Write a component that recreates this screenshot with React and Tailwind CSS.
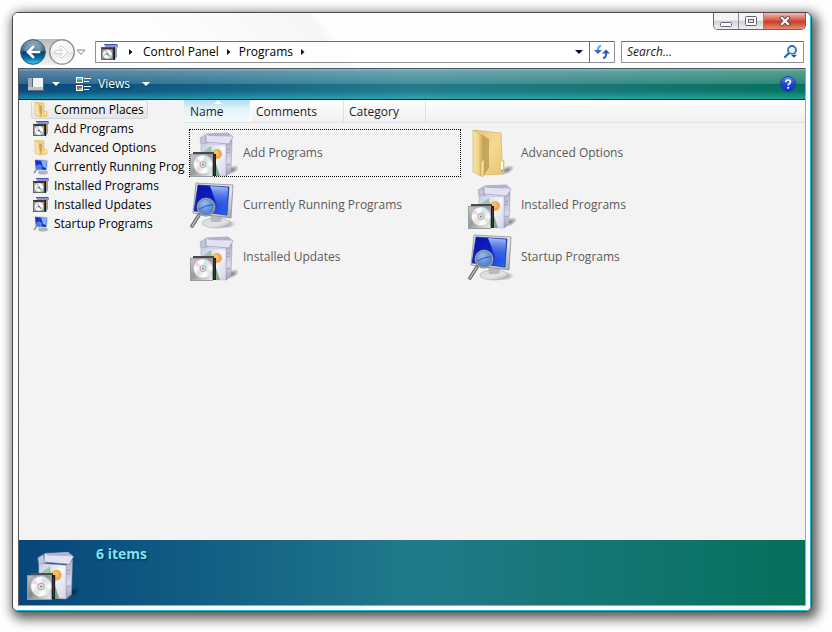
import React from 'react';

const places = [
  { label: 'Common Places', icon: 'folder', selected: true },
  { label: 'Add Programs', icon: 'programs' },
  { label: 'Advanced Options', icon: 'folder' },
  { label: 'Currently Running Prog', icon: 'monitor' },
  { label: 'Installed Programs', icon: 'programs' },
  { label: 'Installed Updates', icon: 'programs' },
  { label: 'Startup Programs', icon: 'monitor' },
];

const items = [
  { label: 'Add Programs', icon: 'programs', focused: true },
  { label: 'Advanced Options', icon: 'folder' },
  { label: 'Currently Running Programs', icon: 'monitor' },
  { label: 'Installed Programs', icon: 'programs' },
  { label: 'Installed Updates', icon: 'programs' },
  { label: 'Startup Programs', icon: 'monitor' },
];

// Gradients shared by all the icons
const IconDefs = () => (
  <svg className="absolute w-0 h-0" aria-hidden="true">
    <defs>
      <linearGradient id="boxFront" x1="0" y1="0" x2="1" y2="1">
        <stop offset="0" stopColor="#c6c6df" />
        <stop offset="0.5" stopColor="#f6f6fd" />
        <stop offset="1" stopColor="#d3d3e8" />
      </linearGradient>
      <linearGradient id="boxSide" x1="0" y1="0" x2="0" y2="1">
        <stop offset="0" stopColor="#b0b0c8" />
        <stop offset="0.6" stopColor="#d9d9ea" />
        <stop offset="1" stopColor="#9c9cb8" />
      </linearGradient>
      <linearGradient id="disc" x1="0" y1="0" x2="1" y2="1">
        <stop offset="0" stopColor="#f1e3ea" />
        <stop offset="0.3" stopColor="#ffffff" />
        <stop offset="0.5" stopColor="#e0e0e3" />
        <stop offset="0.7" stopColor="#fdfdfd" />
        <stop offset="1" stopColor="#dcebe0" />
      </linearGradient>
      <linearGradient id="caseGlass" x1="0" y1="0" x2="1" y2="1">
        <stop offset="0" stopColor="#c9cccd" stopOpacity="0.95" />
        <stop offset="0.45" stopColor="#8b9092" stopOpacity="0.9" />
        <stop offset="1" stopColor="#f4f4f6" stopOpacity="0.95" />
      </linearGradient>
      <linearGradient id="folderBack" x1="0" y1="0" x2="1" y2="1">
        <stop offset="0" stopColor="#e6c576" />
        <stop offset="0.5" stopColor="#f4db92" />
        <stop offset="1" stopColor="#e5c26b" />
      </linearGradient>
      <linearGradient id="folderFlap" x1="0" y1="0" x2="1" y2="0">
        <stop offset="0" stopColor="#fae6a4" />
        <stop offset="0.5" stopColor="#f1d384" />
        <stop offset="1" stopColor="#b89a54" />
      </linearGradient>
      <linearGradient id="screen" x1="0" y1="0" x2="1" y2="1">
        <stop offset="0" stopColor="#04109a" />
        <stop offset="0.4" stopColor="#0b22c8" />
        <stop offset="1" stopColor="#2f6cf2" />
      </linearGradient>
      <linearGradient id="screenShine" x1="0" y1="0" x2="0" y2="1">
        <stop offset="0" stopColor="#c4dcff" stopOpacity="0.85" />
        <stop offset="1" stopColor="#2c63ea" stopOpacity="0.1" />
      </linearGradient>
      <linearGradient id="bezel" x1="0" y1="0" x2="1" y2="1">
        <stop offset="0" stopColor="#d6d9dc" />
        <stop offset="0.6" stopColor="#e3e4e6" />
        <stop offset="1" stopColor="#9da2a7" />
      </linearGradient>
      <radialGradient id="lens" cx="0.4" cy="0.3" r="0.8">
        <stop offset="0" stopColor="#94bbf0" />
        <stop offset="1" stopColor="#3b6ecb" />
      </radialGradient>
      <radialGradient id="floorShadow">
        <stop offset="0" stopColor="#000" stopOpacity="0.5" />
        <stop offset="1" stopColor="#000" stopOpacity="0" />
      </radialGradient>
      <linearGradient id="backBall" x1="0" y1="0" x2="0" y2="1">
        <stop offset="0" stopColor="#8fa9bd" />
        <stop offset="0.45" stopColor="#3a6d93" />
        <stop offset="0.5" stopColor="#053c68" />
        <stop offset="0.75" stopColor="#0b6fa5" />
        <stop offset="1" stopColor="#3fd0f2" />
      </linearGradient>
      <linearGradient id="forwardBall" x1="0" y1="0" x2="0" y2="1">
        <stop offset="0" stopColor="#ffffff" />
        <stop offset="0.48" stopColor="#f2f2f2" />
        <stop offset="0.52" stopColor="#e6e6e7" />
        <stop offset="1" stopColor="#ffffff" />
      </linearGradient>
      <linearGradient id="helpBall" x1="0" y1="0" x2="0" y2="1">
        <stop offset="0" stopColor="#6d90f0" />
        <stop offset="0.5" stopColor="#1d43d8" />
        <stop offset="1" stopColor="#1230c4" />
      </linearGradient>
    </defs>
  </svg>
);

const ProgramsIcon = ({ className }) => (
  <svg viewBox="0 0 48 48" className={className} aria-hidden="true">
    <ellipse cx="42" cy="41" rx="8" ry="4" fill="url(#floorShadow)" transform="rotate(-25 42 41)" />
    <path d="M10 9l5-3 2 8-6 1z" fill="#c3c3dc" stroke="#8a8aad" strokeWidth=".5" />
    <path d="M36 16l6-5-1 32-5 4z" fill="url(#boxSide)" stroke="#9090b0" strokeWidth=".5" />
    <path d="M37 21l3-1M37 24l3-1M37 36l3-1" stroke="#75759c" strokeWidth=".6" />
    <path d="M11 14l25 2v31l-25-1z" fill="url(#boxFront)" stroke="#a1a1c4" strokeWidth=".5" />
    <path d="M16 5l22-1 5 4-4 7-23-2z" fill="#e2e2f2" stroke="#8383aa" strokeWidth=".6" />
    <path d="M17 5l21-1 4 3.500-23-.5z" fill="#b2b2d0" />
    <path d="M11 24l10-7 2 10-12 1z" fill="#9dc4ac" />
    <path d="M26 35l4 12h-4z" fill="#74ad86" />
    <circle cx="27" cy="25" r="5" fill="#eda944" />
    <circle cx="26" cy="24" r="3" fill="#f5bf68" />
    <path d="M3 23h21v2h2v22h-4V25H3z" fill="#1d1d1f" />
    <path d="M3 24h21" stroke="#77777b" />
    <path d="M24.500 27v19" stroke="#55555a" strokeWidth=".6" />
    <rect x=".5" y="25.500" width="22" height="22" fill="url(#caseGlass)" stroke="#9a9ca2" />
    <circle cx="13" cy="35.500" r="9.500" fill="url(#disc)" stroke="#c3c3c7" strokeWidth=".5" />
    <path d="M13 35.500l-9-3 2-5z" fill="#f1c7de" opacity=".7" />
    <path d="M13 35.500l1-9 4 2z" fill="#bfe6ee" opacity=".8" />
    <path d="M13 35.500l9 2-3 5z" fill="#c8e9d0" opacity=".7" />
    <path d="M13 35.500l-3 9-4-3z" fill="#e9e6c3" opacity=".7" />
    <circle cx="13" cy="35.500" r="3" fill="#e6e6e9" stroke="#8e8e93" strokeWidth=".7" />
    <circle cx="13" cy="35.500" r="1" fill="#77777c" />
  </svg>
);

const FolderIcon = ({ className }) => (
  <svg viewBox="0 0 48 48" className={className} aria-hidden="true">
    <ellipse cx="39" cy="41" rx="8" ry="4" fill="url(#floorShadow)" transform="rotate(-25 39 41)" />
    <path d="M5 1l28 3 1 26 2 2v13l-22 1z" fill="url(#folderBack)" stroke="#cfaa57" strokeWidth=".6" />
    <path d="M33 32l2 1v10l-2-1z" fill="#fff" />
    <path d="M33 40l2 1v2l-2-1z" fill="#58b5e6" />
    <path d="M13 5l8 5v29l-6 8z" fill="#a9853a" opacity=".6" />
    <path d="M5 1l9 6 2 3v20l-3 3v14l-8-4z" fill="url(#folderFlap)" stroke="#cfaa57" strokeWidth=".6" />
    <path d="M13 33l3-3v11l-1 7-2-1z" fill="#f6dd98" stroke="#cfaa57" strokeWidth=".5" />
  </svg>
);

const MonitorIcon = ({ className }) => (
  <svg viewBox="0 0 48 48" className={className} aria-hidden="true">
    <ellipse cx="35" cy="43" rx="11" ry="4.500" fill="url(#floorShadow)" />
    <ellipse cx="26" cy="42" rx="14" ry="5" fill="url(#bezel)" stroke="#a3a7ab" strokeWidth=".6" />
    <path d="M20 33h13l-2 8H21z" fill="#b6babe" />
    <path d="M6 2l37 2-2 33-38-5z" fill="url(#bezel)" stroke="#8b9095" strokeWidth=".8" />
    <path d="M8 4l31 2-2 28-33-4z" fill="url(#screen)" stroke="#10207d" strokeWidth=".6" />
    <path d="M20 5l18 1.500L37 29l-9-3z" fill="url(#screenShine)" />
    <path d="M9 5l11 1 4 13-8 10-9-1z" fill="#0718b8" opacity=".5" />
    <path d="M9 34L2 45" stroke="#6c7074" strokeWidth="3.600" strokeLinecap="round" />
    <path d="M9 34L2 45" stroke="#c5c8cb" strokeWidth="1.200" strokeLinecap="round" />
    <circle cx="16" cy="26" r="8.500" fill="url(#lens)" stroke="#727a82" strokeWidth="1.900" />
    <circle cx="16" cy="26" r="8.500" fill="none" stroke="#b8c0c8" strokeWidth=".7" />
    <path d="M9 28c4-1 6-4 14-4" stroke="#2358c4" fill="none" />
  </svg>
);

const ProgramsSmallIcon = ({ className }) => (
  <svg viewBox="0 0 16 16" className={className} aria-hidden="true">
    <path d="M3 0h13v3H4z" fill="#8b93d6" />
    <path d="M3 .5h12" stroke="#4b55a8" />
    <path d="M12 3h3v9l-2 3h-1z" fill="#8d96bd" />
    <path d="M13.500 4v4" stroke="#d99b2c" />
    <rect x="0" y="3" width="13" height="12" fill="#3a3a3c" />
    <path d="M12.500 3v12" stroke="#0b1512" />
    <rect x="1" y="5" width="10" height="9" fill="#a3a5a8" />
    <circle cx="6" cy="9.500" r="4.200" fill="#fff" />
    <path d="M6 9.500L3 7l3-2z" fill="#f3bccd" />
    <path d="M6 9.500l3.500 1-2 2.500z" fill="#6cd09a" />
    <path d="M6 9.500l-3 2V9z" fill="#a9dfc2" />
    <circle cx="6" cy="9.500" r="1" fill="#666" />
    <path d="M.5 4v10.500H12" stroke="#67676b" fill="none" />
  </svg>
);

const FolderSmallIcon = ({ className }) => (
  <svg viewBox="0 0 16 16" className={className} aria-hidden="true">
    <path d="M2 0l9 1v8l3 1v4l-7 1z" fill="#f0d388" stroke="#dcb96d" strokeWidth=".6" />
    <path d="M12.500 10v3" stroke="#e9f3f7" />
    <path d="M6 3l3 1v7l-2 4z" fill="#c9a65a" />
    <path d="M2 0l4 3v7l1 1v4l-5-2z" fill="#f8e2a4" stroke="#dcb96d" strokeWidth=".6" />
  </svg>
);

const MonitorSmallIcon = ({ className }) => (
  <svg viewBox="0 0 16 16" className={className} aria-hidden="true">
    <ellipse cx="10" cy="13.500" rx="5" ry="2" fill="#b0b4b8" />
    <path d="M2 0l13 1-1 11-12-1z" fill="#c9cdd2" />
    <path d="M2 1l12 1-1 9-10-1z" fill="#1433cc" />
    <path d="M8 1.500l6 .5-1 7-3-1z" fill="#7db0f7" />
    <path d="M4 10l-3 4" stroke="#8e9297" strokeWidth="1.600" />
    <circle cx="6" cy="8.500" r="2.500" fill="#3f7be6" stroke="#7d9fd8" strokeWidth=".8" />
  </svg>
);

const largeIcons = { programs: ProgramsIcon, folder: FolderIcon, monitor: MonitorIcon };
const smallIcons = { programs: ProgramsSmallIcon, folder: FolderSmallIcon, monitor: MonitorSmallIcon };

const DownArrow = ({ className = '' }) => (
  <svg viewBox="0 0 8 4" className={`w-2 h-1 ${className}`} aria-hidden="true">
    <path d="M0 0h8L4 4z" fill="currentColor" />
  </svg>
);

const Chevron = () => (
  <svg viewBox="0 0 4 6" className="w-1 h-1.5" aria-hidden="true">
    <path d="M0 0l3.500 3L0 6z" fill="#111" />
  </svg>
);

const CaptionButtons = () => (
  <div className="flex self-end h-[17px] rounded-b-[5px] border border-t-0 border-[#62666d] overflow-hidden">
    <button aria-label="Minimize" className="w-[25px] flex items-center justify-center pt-px border-r border-[#85898f] bg-linear-to-b from-[#f4f4f5] from-45% via-[#cfd1d4] via-50% to-[#f1f1f2]">
      <svg viewBox="0 0 14 12" className="w-3.5 h-3">
        <rect x="1.500" y="6.500" width="11" height="4" rx="1" fill="#fff" stroke="#5d6270" />
      </svg>
    </button>
    <button aria-label="Maximize" className="w-[25px] flex items-center justify-center border-r border-[#85898f] bg-linear-to-b from-[#f4f4f5] from-45% via-[#cfd1d4] via-50% to-[#f1f1f2]">
      <svg viewBox="0 0 14 12" className="w-3.5 h-3">
        <rect x="1.500" y="1.500" width="11" height="9" rx="1" fill="#fff" stroke="#5d6270" />
        <rect x="4.500" y="4.500" width="5" height="3" fill="#dfe1e4" stroke="#5d6270" />
      </svg>
    </button>
    <button aria-label="Close" className="w-[41px] flex items-center justify-center bg-linear-to-b from-[#efbcb1] via-[#cb3c24] via-55% to-[#e58a72]">
      <svg viewBox="0 0 12 10" className="w-3 h-2.5">
        <path d="M3 2l6 6M9 2L3 8" stroke="#5b4a52" strokeWidth="4" strokeLinecap="square" />
        <path d="M3 2l6 6M9 2L3 8" stroke="#fff" strokeWidth="2.200" strokeLinecap="square" />
      </svg>
    </button>
  </div>
);

const NavButtons = () => (
  <div className="flex items-center w-[75px] shrink-0">
    <div className="flex rounded-full bg-linear-to-b from-[#b9b9b9] to-[#f1f1f1] gap-[3px]">
      <button aria-label="Back" className="rounded-full">
        <svg viewBox="0 0 26 26" className="w-[26px] h-[26px] block">
          <circle cx="13" cy="13" r="12.300" fill="url(#backBall)" stroke="#3b5468" />
          <path d="M4 12C4 2 22 2 22 12c-6-2-12-2-18 0z" fill="#fff" opacity=".2" />
          <path d="M19 13H8M13 8l-5 5 5 5" stroke="#fff" strokeWidth="2.600" fill="none" strokeLinecap="square" />
        </svg>
      </button>
      <button aria-label="Forward" className="rounded-full">
        <svg viewBox="0 0 26 26" className="w-[26px] h-[26px] block">
          <circle cx="13" cy="13" r="12.200" fill="url(#forwardBall)" stroke="#8a8a8c" strokeWidth="1.300" />
          <path d="M6 11.500h7.500L10.500 8.500l2-2L19 13l-6.500 6.500-2-2 3-3H6z" fill="#fbfbfb" stroke="#d2d2d5" />
        </svg>
      </button>
    </div>
    <button aria-label="Recent pages" className="ml-px">
      <svg viewBox="0 0 10 7" className="w-2.5 h-[7px] block">
        <path d="M1 1h8L5 5.500z" fill="#fff" stroke="#85858c" />
      </svg>
    </button>
  </div>
);

const AddressBar = () => (
  <div className="flex flex-1 h-[22px] border border-[#8f9193] border-t-[#6d6f72] rounded-[1px] bg-white/80">
    <div className="flex flex-1 items-center pl-[5px]">
      <ProgramsSmallIcon className="w-[17px] h-[17px]" />
      <span className="w-[25px] flex justify-center"><Chevron /></span>
      <a href="#control-panel">Control Panel</a>
      <span className="w-5 flex justify-center"><Chevron /></span>
      <a href="#programs">Programs</a>
      <span className="w-5 flex justify-center"><Chevron /></span>
    </div>
    <button aria-label="Previous locations" className="w-5 flex items-center justify-center text-[#060650]">
      <DownArrow />
    </button>
    <button aria-label="Refresh" className="w-[25px] border-l border-[#6d6f72] flex items-center justify-center">
      <svg viewBox="0 0 16 14" className="w-4 h-3.5">
        <path d="M7 1C5 1 4 2.500 4 5v1" stroke="#45b3e6" strokeWidth="2" fill="none" />
        <path d="M0 5h8L4 9z" fill="#2a6bc4" />
        <path d="M9 13c2 0 3-1.500 3-4V8" stroke="#3b62ba" strokeWidth="2" fill="none" />
        <path d="M8 8.500h8L12 4.500z" fill="#2359a8" />
      </svg>
    </button>
  </div>
);

const SearchBox = () => (
  <div className="flex items-center w-[183px] h-[22px] ml-[6px] border border-[#8f9193] border-t-[#6d6f72] rounded-[1px] bg-white/80">
    <input
      type="text"
      aria-label="Search"
      placeholder="Search..."
      className="flex-1 min-w-0 px-[5px] italic bg-transparent outline-none placeholder:text-[#1a1a1a]"
    />
    <button aria-label="Search options" className="mr-1">
      <svg viewBox="0 0 16 16" className="w-4 h-4 block">
        <path d="M6 9l-4 4" stroke="#2b6fb8" strokeWidth="2.400" strokeLinecap="round" />
        <circle cx="9" cy="6" r="4" fill="#eaf5fc" stroke="#2f74c0" strokeWidth="1.800" />
        <path d="M7.500 10.500h7L11 14z" fill="#1f4a94" stroke="#fff" strokeWidth=".5" />
      </svg>
    </button>
  </div>
);

const Toolbar = () => (
  <div className="h-8 border-y border-t-[#4c5a61] border-b-[#0c2e3c] bg-linear-to-r from-[#07467a] via-[#217a8b] to-[#04705a] text-white">
    <div className="flex items-center h-full px-[9px] bg-[linear-gradient(to_bottom,rgba(255,255,255,.5)_0,rgba(255,255,255,.32)_8%,rgba(255,255,255,.16)_50%,rgba(255,255,255,0)_51%,rgba(60,220,220,.05)_75%,rgba(60,220,220,.45)_100%)]">
      <button aria-label="Layout" className="flex items-center gap-2 h-full">
        <svg viewBox="0 0 16 14" className="w-4 h-3.5">
          <rect x="0" y="1" width="16" height="13" fill="#5c6770" />
          <rect x="0" y="1" width="4" height="12" fill="#a4abb1" />
          <rect x="5" y="1" width="10" height="9" fill="#f3f4f4" />
          <rect x="0" y="10" width="15" height="3" fill="#bcc1c5" />
        </svg>
        <DownArrow className="text-white" />
      </button>
      <button className="flex items-center h-full ml-4 [text-shadow:0_1px_2px_#05202f]">
        <svg viewBox="0 0 16 16" className="w-4 h-4 mr-1.5">
          <rect x="0" y="1" width="7" height="6" fill="#fff" />
          <rect x="1" y="2" width="5" height="2" fill="#6fb9e6" />
          <rect x="1" y="4" width="5" height="2" fill="#3e9d56" />
          <rect x="0" y="9" width="7" height="6" fill="#fff" />
          <rect x="1" y="10" width="2" height="2" fill="#d4452f" />
          <rect x="1" y="12" width="2" height="2" fill="#3e9d56" />
          <rect x="3" y="10" width="3" height="2" fill="#3b6ed6" />
          <rect x="3" y="12" width="3" height="2" fill="#e5b031" />
          <path d="M8 2.500h7M8 5.500h5M8 10.500h7M8 13.500h5" stroke="#fff" />
        </svg>
        Views
        <DownArrow className="text-white ml-3" />
      </button>
      <button aria-label="Help" className="ml-auto">
        <svg viewBox="0 0 16 16" className="w-4 h-4 block">
          <circle cx="8" cy="8" r="7.500" fill="url(#helpBall)" stroke="#1b3f9a" />
          <path d="M5.800 6.200c0-3 4.600-2.800 4.600-.2 0 1.600-2.200 1.700-2.200 3.400" stroke="#fff" strokeWidth="1.700" fill="none" />
          <circle cx="8.200" cy="11.800" r="1.100" fill="#fff" />
        </svg>
      </button>
    </div>
  </div>
);

const Sidebar = () => (
  <nav aria-label="Places" className="w-[165px] shrink-0 pl-3">
    {places.map(({ label, icon, selected }) => {
      const Icon = smallIcons[icon];
      return (
        <a
          key={label}
          href="#place"
          className={`flex w-fit items-center h-[19px] pl-px pr-[3px] border rounded-[3px] ${
            selected ? 'border-[#d5d5d5] bg-linear-to-b from-[#f6f6f6] to-[#e6e6e6]' : 'border-transparent'
          }`}
        >
          <Icon className="w-4 h-4 shrink-0 mr-[5px]" />
          <span className="whitespace-nowrap">{label}</span>
        </a>
      );
    })}
  </nav>
);

const ColumnHeaders = () => (
  <div className="flex h-[23px] border-b border-[#e2e2e2] bg-linear-to-b from-[#fdfdfd] to-[#f1f1f1] text-[#1e1e2e]">
    <button className="relative w-[67px] pt-px px-1.5 text-left border-r border-white bg-linear-to-b from-[#b5dcee] via-[#e0f2fa] via-40% to-[#f6fbfe]">
      <DownArrow className="absolute top-0 left-[30px] rotate-180 text-white" />
      Name
    </button>
    <button className="w-[93px] pt-px px-[5px] text-left border-r border-[#e0e0e0]">Comments</button>
    <button className="w-[82px] pt-px px-[5px] text-left border-r border-[#e0e0e0]">Category</button>
  </div>
);

const DetailsPane = () => (
  <footer className="flex h-[65px] px-2 bg-linear-to-r from-[#07467a] via-[#217a8b] via-50% to-[#04705a]">
    <ProgramsIcon className="w-[52px] h-[52px] mt-2" />
    <p className="mt-1 ml-[17px] text-sm font-bold text-[#7be6f8] [text-shadow:1px_1px_2px_#04263c]">6 items</p>
  </footer>
);

export default function App() {
  return (
    <div className="min-h-screen flex flex-col bg-white pt-3 pl-3 pr-5 pb-5 font-['Open_Sans','Noto_Sans',sans-serif] text-xs text-black">
      <IconDefs />
      <div className="flex-1 flex flex-col rounded-md border border-[#4a4a4c] bg-[#fbfbfb] shadow-[3px_4px_12px_3px_rgba(0,0,0,.65)]">
        <div className="flex-1 flex flex-col rounded-[5px] border-r border-b border-[#19c3dc] bg-[linear-gradient(52deg,#fdfdfd_0,#f8f8f8_28%,#fefefe_28%,#fefefe_46%,#f6f6f6_60%,#fefefe_61%)] pl-[5px] pr-1 pb-1">
          <header className="flex flex-col h-[55px]">
            <CaptionButtons />
            <div className="flex items-center h-[38px] pl-0.5 pr-0.5 pt-1.5">
              <NavButtons />
              <AddressBar />
              <SearchBox />
            </div>
          </header>
          <div className="flex-1 flex flex-col border border-t-0 border-l-[#55585a] border-r-[#a3a5a6] border-b-[#a3a5a6] bg-[#f3f3f3]">
            <Toolbar />
            <div className="flex-1 flex">
              <Sidebar />
              <main className="flex-1 min-w-0">
                <ColumnHeaders />
                <div className="grid grid-cols-[272px_272px] gap-x-1.5 gap-y-1 px-[5px] pt-1.5">
                  {items.map(({ label, icon, focused }) => {
                    const Icon = largeIcons[icon];
                    return (
                      <button
                        key={label}
                        className={`flex items-center h-12 text-left text-[#5b5b5b] border border-dotted ${
                          focused ? 'border-black' : 'border-transparent'
                        }`}
                      >
                        <Icon className="w-12 h-12 shrink-0 mr-[5px]" />
                        {label}
                      </button>
                    );
                  })}
                </div>
              </main>
            </div>
            <DetailsPane />
          </div>
        </div>
      </div>
    </div>
  );
}
